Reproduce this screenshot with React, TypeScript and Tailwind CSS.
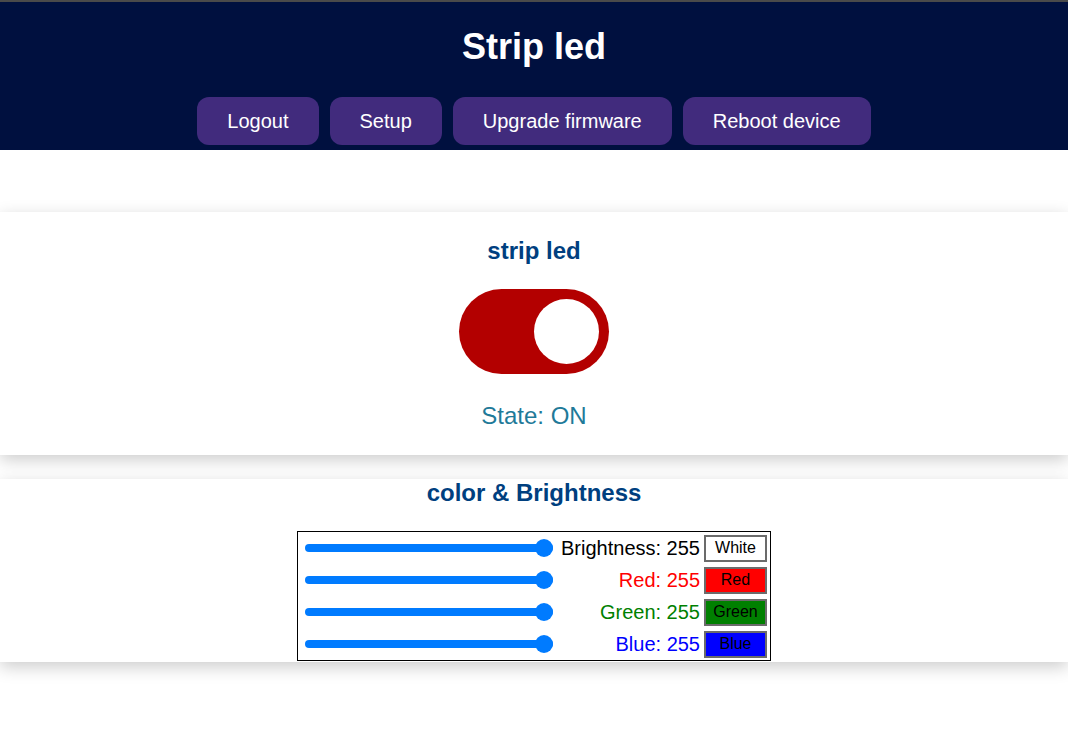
import React from 'react';

const rows = [
  { label: 'Brightness: 255', color: 'text-black', btn: 'White', btnBg: 'bg-white' },
  { label: 'Red: 255', color: 'text-[#ff0000]', btn: 'Red', btnBg: 'bg-[#ff0000]' },
  { label: 'Green: 255', color: 'text-[#008000]', btn: 'Green', btnBg: 'bg-[#008000]' },
  { label: 'Blue: 255', color: 'text-[#0000ff]', btn: 'Blue', btnBg: 'bg-[#0000ff]' },
];

function Slider() {
  return (
    <div className="relative ml-[7px] w-[248px] h-[8px] rounded-full bg-[#007bff]">
      <div className="absolute right-0 top-1/2 -translate-y-1/2 w-[18px] h-[18px] rounded-full bg-[#007bff]" />
    </div>
  );
}

export default function App() {
  return (
    <div className="min-h-screen bg-white font-['Liberation_Sans',Arial,sans-serif]">
      <header className="bg-[#00103f] border-t-2 border-[#4a4a4a] pt-[24px] pb-[5px] text-center">
        <h1 className="text-[36px] leading-[41px] font-bold text-white">Strip led</h1>
        <nav className="mt-[30px] flex justify-center gap-[11px]">
          {['Logout', 'Setup', 'Upgrade firmware', 'Reboot device'].map((b) => (
            <button key={b} className="h-[48px] px-[30px] rounded-[12px] bg-[#412b7d] text-white text-[20px]">
              {b}
            </button>
          ))}
        </nav>
      </header>

      <section className="mt-[62px] bg-white shadow-[0_5px_16px_rgba(0,0,0,0.2)] pt-[25px] pb-[25px] flex flex-col items-center">
        <h2 className="text-[24px] leading-[28px] font-bold text-[#003f7f]">strip led</h2>
        <div className="mt-[24px] w-[150px] h-[85px] rounded-full bg-[#b30000] flex items-center justify-end pr-[10px]">
          <div className="w-[65px] h-[65px] rounded-full bg-white" />
        </div>
        <p className="mt-[28px] text-[24px] leading-[28px] text-[#1f7a99]">State: ON</p>
      </section>

      <section className="mt-[24px] bg-white shadow-[0_5px_16px_rgba(0,0,0,0.2)] pb-[1px] flex flex-col items-center">
        <h2 className="text-[24px] leading-[28px] font-bold text-[#003f7f]">color &amp; Brightness</h2>
        <div className="mt-[24px] w-[474px] border border-black">
          {rows.map((r) => (
            <div key={r.btn} className="h-[32px] flex items-center">
              <div className="w-[258px]">
                <Slider />
              </div>
              <div className={`flex-1 text-right text-[20px] leading-[23px] ${r.color}`}>{r.label}</div>
              <button
                className={`ml-[4px] mr-[3px] w-[63px] h-[27px] border-2 border-[#6b6b6b] text-[16px] leading-[18px] text-black ${r.btnBg}`}
              >
                {r.btn}
              </button>
            </div>
          ))}
        </div>
      </section>
    </div>
  );
}
